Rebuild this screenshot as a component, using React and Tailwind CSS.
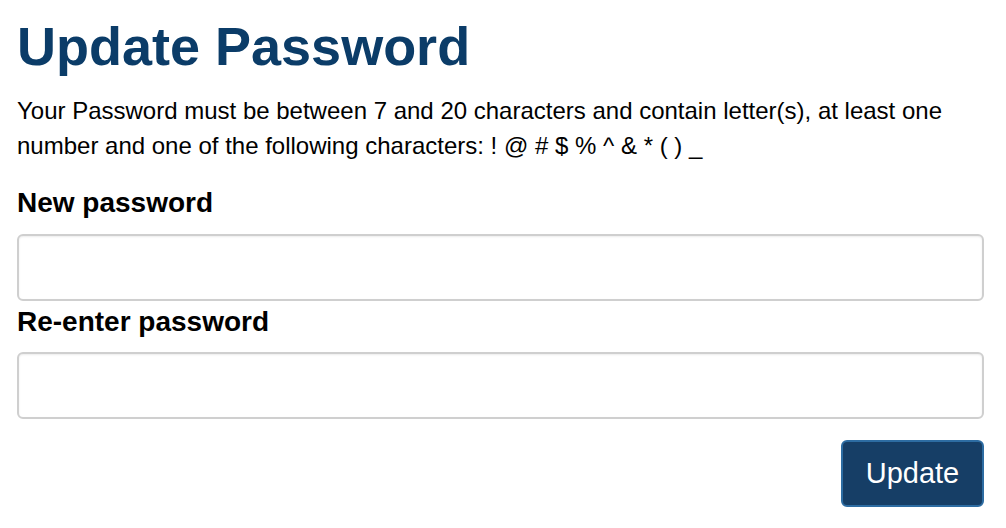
import React from "react";

export default function App() {
  return (
    <div
      className="bg-white w-[1006px] h-[528px] pl-[17px] pr-[22px] pt-[16px] text-black"
      style={{ fontFamily: '"Liberation Sans", Arial, sans-serif' }}
    >
      <h1 className="text-[54px] leading-[60px] font-bold text-[#0b3c68]">
        Update Password
      </h1>

      <p className="mt-[17px] text-[24px] leading-[35px]">
        Your Password must be between 7 and 20 characters and contain letter(s), at least one
        number and one of the following characters: ! @ # $ % ^ &amp; * ( ) _
      </p>

      <form className="mt-[24px] flex flex-col">
        <label className="text-[28px] leading-[32px] font-bold">New password</label>
        <input
          type="password"
          className="mt-[15px] h-[67px] w-full rounded-[6px] border-2 border-[#cfcfcf] shadow-[inset_0_1px_2px_rgba(0,0,0,0.08)] outline-none"
        />

        <label className="mt-[5px] text-[28px] leading-[32px] font-bold">Re-enter password</label>
        <input
          type="password"
          className="mt-[14px] h-[67px] w-full rounded-[6px] border-2 border-[#cfcfcf] shadow-[inset_0_1px_2px_rgba(0,0,0,0.08)] outline-none"
        />

        <div className="mt-[21px] flex justify-end">
          <button
            type="button"
            className="h-[67px] w-[143px] rounded-[6px] border-2 border-[#2d6ca2] bg-[#163e66] text-[29px] text-white"
          >
            Update
          </button>
        </div>
      </form>
    </div>
  );
}
